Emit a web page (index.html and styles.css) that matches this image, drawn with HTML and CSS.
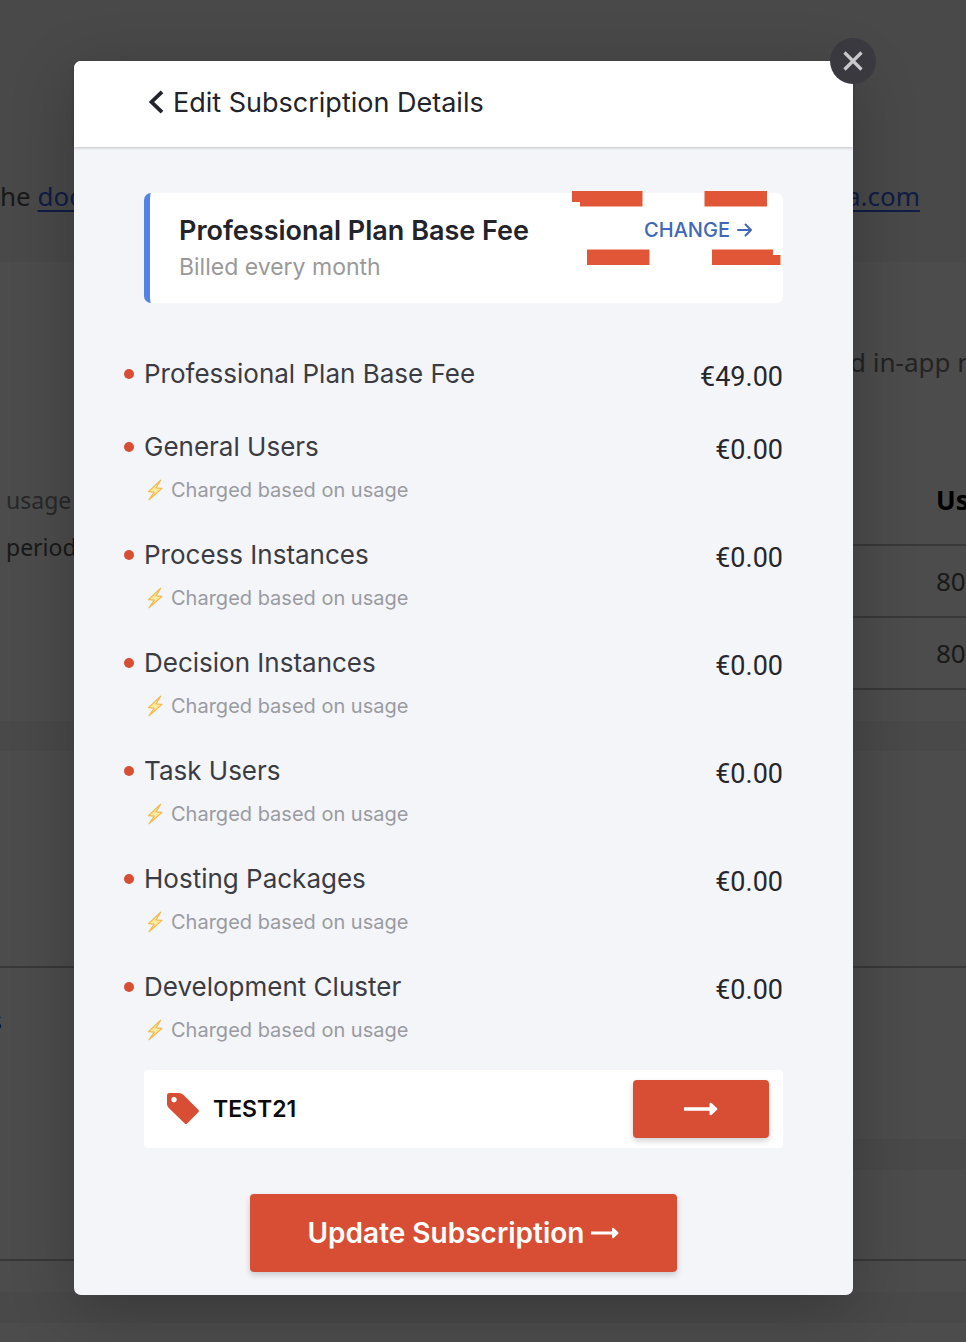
FILE: index.html
```html
<!DOCTYPE html>
<html lang="en">
<head>
<meta charset="utf-8">
<meta name="viewport" content="width=device-width, initial-scale=1">
<title>Edit Subscription Details</title>
<link rel="stylesheet" href="styles.css">
</head>
<body>
<svg class="sprite" aria-hidden="true">
  <symbol id="bolt" viewBox="0 0 16 22">
    <path d="M13.6 1.2 1.5 12.6l5.7.5L2 20.8 15 9.4l-5.9-.6z" fill="#fdeb9c" stroke="#f3b850" stroke-width="1.2" stroke-linejoin="round"/>
  </symbol>
  <symbol id="long-arrow" viewBox="0 0 34 14">
    <path d="M0 5.2h25.500V2Q25.500 0 27.500 1L33 6.200Q34 7 33 7.800L27.500 13Q25.500 14 25.500 12V8.800H0z" fill="#fff"/>
  </symbol>
</svg>
<div class="stage">
  <div class="page" aria-hidden="true">
    <div class="intro"><span>he <a href="#docs">doc</a></span><a href="#mail">a.com</a></div>
    <div class="panel">
      <div class="notes"><p class="note-light">usage</p><p>period</p></div>
      <div class="usage">
        <p>d in-app n</p>
        <table>
          <tr><th>Us</th></tr>
          <tr><td>80</td></tr>
          <tr><td>80</td></tr>
        </table>
      </div>
    </div>
    <div class="columns">
      <div class="stack">
        <div class="card"><div class="card-head"></div><div class="card-body"><span class="cut">s</span></div><div class="card-foot"></div></div>
      </div>
      <div class="stack">
        <div class="card"><div class="card-head"></div><div class="card-rest"></div></div>
        <div class="card"><div class="card-low"></div><div class="card-end"></div></div>
      </div>
    </div>
    <div class="last"></div>
  </div>

  <div class="overlay">
    <main class="modal">
      <button class="close" aria-label="Close"><svg viewBox="0 0 22 22" width="22" height="22"><path d="M2.500 2.500l17 17M19.500 2.500l-17 17" stroke="#c9c9cb" stroke-width="3.200"/></svg></button>
      <header class="modal-head">
        <button class="back"><svg viewBox="0 0 16 24" width="16" height="24"><path d="M14 1.800 3.500 12 14 22.200" fill="none" stroke="#22232b" stroke-width="3.800"/></svg><span>Edit Subscription Details</span></button>
      </header>
      <div class="modal-body">
        <section class="plan">
          <div>
            <h1>Professional Plan Base Fee</h1>
            <p>Billed every month</p>
          </div>
          <a class="change" href="#change">CHANGE <svg viewBox="0 0 16 14" width="16" height="14"><path d="M1 7h13M8.500 1.500 14 7l-5.500 5.500" fill="none" stroke="currentColor" stroke-width="2" stroke-linecap="round" stroke-linejoin="round"/></svg></a>
          <svg class="marker" viewBox="0 0 209 76" width="209" height="76" aria-hidden="true"><path d="M0 1h70.500v15.500H8V12H0zM132.500 1H195v15.500h-62.500zM15 59.500h62.500V75H15zM140 59.500h61V65h7.500v10H140z" fill="#e05636"/></svg>
        </section>
        <ul class="items">
          <li><div><h2>Professional Plan Base Fee</h2></div><span class="price">€49.00</span></li>
          <li><div><h2>General Users</h2><p><svg><use href="#bolt"/></svg>Charged based on usage</p></div><span class="price">€0.00</span></li>
          <li><div><h2>Process Instances</h2><p><svg><use href="#bolt"/></svg>Charged based on usage</p></div><span class="price">€0.00</span></li>
          <li><div><h2>Decision Instances</h2><p><svg><use href="#bolt"/></svg>Charged based on usage</p></div><span class="price">€0.00</span></li>
          <li><div><h2>Task Users</h2><p><svg><use href="#bolt"/></svg>Charged based on usage</p></div><span class="price">€0.00</span></li>
          <li><div><h2>Hosting Packages</h2><p><svg><use href="#bolt"/></svg>Charged based on usage</p></div><span class="price">€0.00</span></li>
          <li><div><h2>Development Cluster</h2><p><svg><use href="#bolt"/></svg>Charged based on usage</p></div><span class="price">€0.00</span></li>
        </ul>
        <form class="coupon">
          <svg viewBox="0 0 32 32" width="32" height="32" aria-hidden="true"><path fill-rule="evenodd" d="M2.500 0h9.500q2.300 0 4 1.500L31.300 16.800q1.200 1.200 0 2.400L20.200 30.400q-1.200 1.200-2.400 0L1.800 15Q0 13.200 0 11V2.500Q0 0 2.500 0zM7 4a2.700 2.700 0 1 0 .01 0z" fill="#d84e34"/></svg>
          <input type="text" value="TEST21" aria-label="Coupon code">
          <button type="button" class="primary apply" aria-label="Apply coupon"><svg width="34" height="14"><use href="#long-arrow"/></svg></button>
        </form>
        <button class="primary update">Update Subscription <svg width="28" height="12"><use href="#long-arrow"/></svg></button>
      </div>
    </main>
  </div>
</div>
</body>
</html>
```
FILE: styles.css
```css
* { box-sizing: border-box; }
body { margin: 0; background: #f4f4f4; font-family: Inter, "Liberation Sans", sans-serif; color: #22232b; }
h1, h2, p, ul { margin: 0; padding: 0; font-weight: 400; }
button { border: 0; padding: 0; font: inherit; color: inherit; background: none; cursor: pointer; }
svg { display: block; flex: none; }
.sprite { position: absolute; width: 0; height: 0; }
.stage { display: grid; grid-template-columns: minmax(0, 1fr); min-height: 100vh; }
.stage > * { grid-area: 1 / 1; }

/* Page behind the dialog */
.page { display: flex; flex-direction: column; overflow: hidden; font-family: "Noto Sans", sans-serif; font-size: 26px; color: #565656; }
.page a { color: #3763e8; text-underline-offset: 4px; text-decoration-thickness: 2px; }
.intro { display: flex; justify-content: space-between; height: 262px; padding: 178px 46px 0 0; line-height: 36px; }
.panel { display: flex; justify-content: space-between; height: 459px; background: #fff; }
.notes { padding: 215px 0 0 6px; font-size: 23px; line-height: 47px; }
.note-light { color: #858585; }
.usage { width: 116px; padding-top: 82px; white-space: nowrap; color: #777; line-height: 36px; }
.usage p { height: 111px; }
.usage table { width: 100%; table-layout: fixed; border-collapse: collapse; }
.usage th, .usage td { height: 72px; padding: 0 0 0 86px; border-bottom: 2px solid #bbb; text-align: left; color: #565656; }
.usage th { height: 90px; font-weight: 700; color: #000; }
.columns { display: flex; justify-content: space-between; padding: 30px 0; margin-bottom: 1px; }
.stack { display: flex; flex-direction: column; gap: 31px; width: 50%; }
.card { background: #fff; }
.card-head { height: 217px; border-bottom: 2px solid #bbb; }
.card-body { height: 293px; border-bottom: 2px solid #bbb; padding-top: 34px; color: #000; line-height: 36px; }
.cut { display: flex; justify-content: flex-end; width: 2px; overflow: hidden; }
.card-foot { height: 31px; }
.card-rest { height: 171px; }
.card-low { height: 91px; border-bottom: 2px solid #bbb; }
.card-end { height: 31px; }
.last { flex: 1; background: #fff; }

/* Dialog */
.overlay { padding: 61px 113px 47px 74px; background: rgba(0, 0, 0, .7); }
.modal { position: relative; border-radius: 7px; background: #f3f5f9; box-shadow: 0 16px 64px rgba(0, 0, 0, .24); }
.close { position: absolute; top: -23px; right: -23px; display: grid; place-items: center; width: 46px; height: 46px; border-radius: 50%; background: #3a393f; }
.modal-head { display: flex; height: 86px; padding: 0 74px; border-radius: 7px 7px 0 0; background: #fff; box-shadow: 0 1px 3px rgba(0, 0, 0, .2); }
.back { display: flex; align-items: center; gap: 9px; padding-bottom: 4px; font-size: 27px; }
.modal-body { display: flex; flex-direction: column; padding: 46px 70px 23px; }
.plan { position: relative; display: flex; justify-content: space-between; height: 110px; padding: 20px 30px 0 29px; border-left: 6px solid #5483e8; border-radius: 7px; background: #fff; }
.plan h1 { font-size: 27px; line-height: 36px; font-weight: 600; }
.plan p { font-size: 23px; line-height: 36px; color: #999; }
.change { display: flex; align-items: center; gap: 7px; height: 34px; font-size: 20px; font-weight: 500; color: #4068b8; text-decoration: none; }
.marker { position: absolute; top: -3px; right: 2px; pointer-events: none; }
.items { display: flex; flex-direction: column; gap: 32px; margin: 53px 0 25px; list-style: none; }
.items li { position: relative; display: flex; justify-content: space-between; }
.items li::before { content: ""; position: absolute; left: -20px; top: 13px; width: 10px; height: 10px; border-radius: 50%; background: #d84e34; }
.items h2 { font-size: 26px; line-height: 36px; color: #3b3c43; }
.items p { display: flex; align-items: center; gap: 8px; margin-top: 10px; padding-left: 3px; font-size: 20px; line-height: 30px; color: #9a9ba1; }
.items p svg { width: 16px; height: 22px; }
.price { padding: 3px 0 2px; font-family: Roboto, "Liberation Sans", sans-serif; font-size: 27px; line-height: 36px; color: #26272c; }
.coupon { display: flex; align-items: center; height: 78px; padding: 0 14px 0 23px; border-radius: 4px; background: #fff; }
.coupon input { flex: 1; min-width: 0; margin-left: 14px; padding: 0; border: 0; background: none; font: 600 23px Inter, sans-serif; color: #0c0c0e; }
.primary { display: flex; align-items: center; justify-content: center; border-radius: 4px; background: #d84e34; color: #fff; box-shadow: 0 3px 6px rgba(0, 0, 0, .18); }
.apply { width: 136px; height: 58px; }
.update { align-self: center; gap: 7px; height: 78px; margin-top: 46px; padding: 0 58px; font-size: 28px; font-weight: 600; }
```
